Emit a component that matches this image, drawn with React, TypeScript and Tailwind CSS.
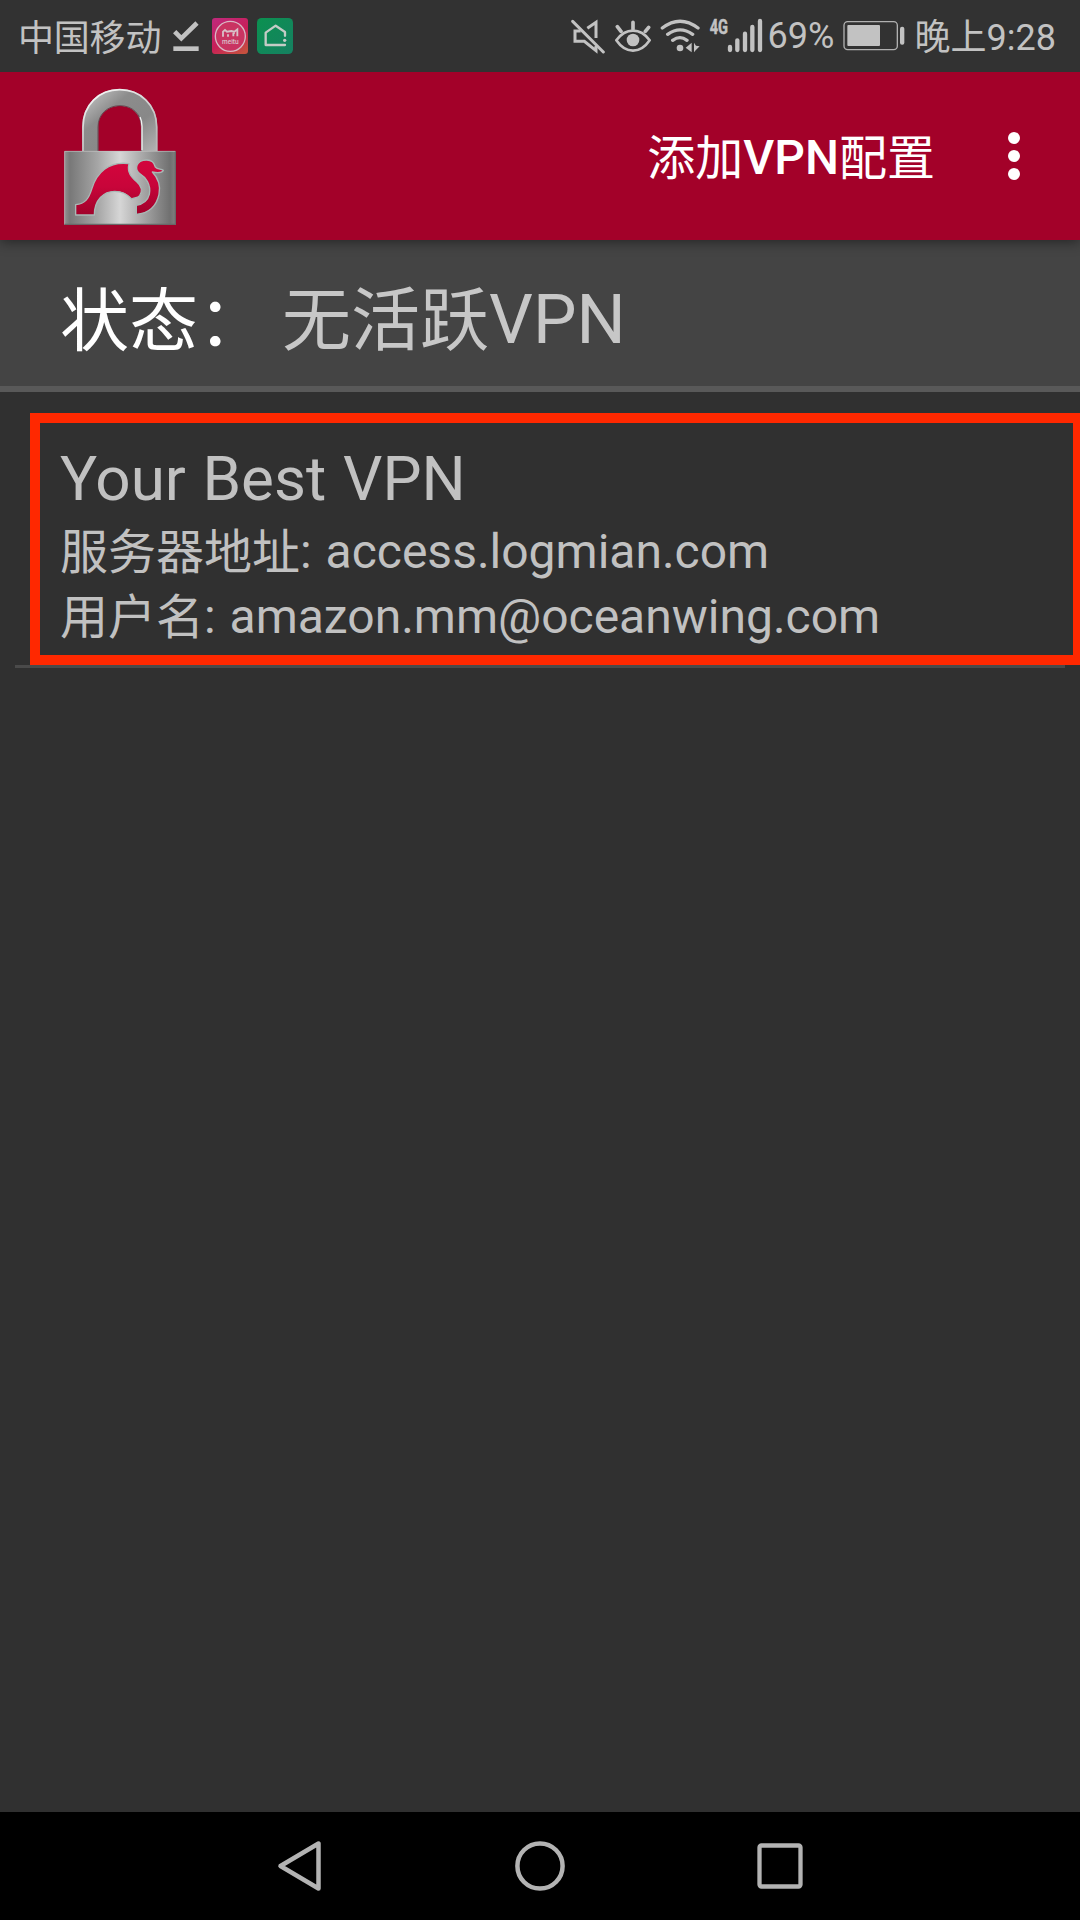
import React from "react";

function DownloadDone() {
  return (
    <svg className="ml-[11px] h-9 w-[28px]" viewBox="513 54 84 108">
      <path d="M521 95 541 115 588 69" fill="none" stroke="#c2c2c2" strokeWidth="14" />
      <path d="M517 146H593" stroke="#c2c2c2" strokeWidth="14" />
    </svg>
  );
}

function MeituIcon() {
  return (
    <svg className="ml-3 h-9 w-9" viewBox="0 0 108 108">
      <defs>
        <linearGradient id="meitu" x1="0.2" y1="0" x2="0.8" y2="1">
          <stop offset="0" stopColor="#c02878" />
          <stop offset="0.55" stopColor="#c81f58" />
          <stop offset="1" stopColor="#c5503f" />
        </linearGradient>
      </defs>
      <rect width="108" height="108" rx="9" fill="url(#meitu)" />
      <circle cx="55" cy="55" r="45" fill="#c93462" stroke="#d8b8c4" strokeWidth="4" />
      <path d="M33 56V41L39 36 45 41 58 39 67 41 76 34V55M48 56V49M64 55V46L68 44" fill="none" stroke="#d8c0c8" strokeWidth="5.5" />
      <text x="30" y="78" fontSize="22" fontWeight="500" fontFamily="Roboto, sans-serif" fill="#d8c0c8" textLength="50" lengthAdjust="spacingAndGlyphs">meitu</text>
    </svg>
  );
}

function HouseIcon() {
  return (
    <svg className="ml-[9px] h-9 w-9" viewBox="0 0 108 108">
      <defs>
        <linearGradient id="house" x1="0" y1="0" x2="1" y2="1">
          <stop offset="0" stopColor="#0b9150" />
          <stop offset="1" stopColor="#168061" />
        </linearGradient>
      </defs>
      <rect width="108" height="108" rx="14" fill="url(#house)" />
      <path d="M84 53V42L56 23 26 44V81H84" fill="none" stroke="#c4ccc6" strokeWidth="7" strokeLinejoin="round" strokeLinecap="round" />
      <circle cx="83" cy="67" r="5" fill="#c4ccc6" />
    </svg>
  );
}

function MuteIcon() {
  return (
    <svg className="h-9 w-[34px]" viewBox="33 54 102 108" fill="none" stroke="#c2c2c2" strokeWidth="9">
      <path d="M38 64 130 156" strokeLinecap="round" />
      <path d="M62 93H45V124H73L108 152V138M82 85 108 67V114" />
    </svg>
  );
}

function EyeIcon() {
  return (
    <svg className="ml-[10px] h-9 w-9" viewBox="165 54 108 108" fill="none" stroke="#c2c2c2" strokeWidth="8">
      <path d="M169 121Q190 92 219 92T269 121Q248 152 219 152T169 121Z" strokeLinejoin="round" />
      <circle cx="219" cy="120" r="19" fill="#c2c2c2" stroke="none" />
      <path d="M219 67V88M172 80 183 94M266 82 256 94" strokeWidth="11" strokeLinecap="round" />
    </svg>
  );
}

function WifiIcon() {
  return (
    <svg className="ml-[9px] h-9 w-[41px]" viewBox="300 54 123 108" fill="none" stroke="#c2c2c2" strokeWidth="10" strokeLinecap="round">
      <path d="M307 84Q360 43 414 84M323 103Q360 76 398 103M338 121Q360 105 381 121" />
      <circle cx="360" cy="144" r="10" fill="#c2c2c2" stroke="none" />
      <path d="M377 143 395 128V157ZM402 128 402 157 407 151 419 139 408 137Z" fill="#c2c2c2" stroke="none" />
    </svg>
  );
}

function SignalIcon() {
  return (
    <svg className="ml-2 h-9 w-[54px] overflow-visible" viewBox="447 54 162 108">
      <text x="449" y="102" fontSize="59" fontWeight="700" fontFamily="Roboto, sans-serif" fill="#c2c2c2" stroke="#c2c2c2" strokeWidth="1.5" textLength="55" lengthAdjust="spacingAndGlyphs">4G</text>
      <path d="M510 141V150M532 121V150M555 101V150M577 81V150M600 63V150" stroke="#c2c2c2" strokeWidth="13" strokeLinecap="round" />
    </svg>
  );
}

function BatteryIcon() {
  return (
    <svg className="h-9 w-[62px]" viewBox="249 54 186 108">
      <rect x="252" y="65" width="160" height="84" rx="11" fill="none" stroke="#b0b0b0" strokeWidth="4" />
      <rect x="262" y="75" width="98" height="63" rx="3" fill="#c2c2c2" />
      <rect x="420" y="80" width="13" height="54" rx="6" fill="#c2c2c2" />
    </svg>
  );
}

function StatusBar() {
  return (
    <header className="relative z-20 flex h-[72px] items-center bg-[#323232] pl-[18px] pr-6 text-[36px] leading-[36px] text-[#c2c2c2]">
      <span className="relative top-[2.5px] tracking-[-0.2px]">中国移动</span>
      <DownloadDone />
      <MeituIcon />
      <HouseIcon />
      <div className="ml-auto flex items-center">
        <MuteIcon />
        <EyeIcon />
        <WifiIcon />
        <SignalIcon />
        <span className="relative top-[-0.5px] ml-[5px] w-[75px]">69%</span>
        <BatteryIcon />
        <span className="relative top-[2px] ml-[10px] whitespace-nowrap">晚上9:28</span>
      </div>
    </header>
  );
}

function LockLogo() {
  return (
    <svg className="mt-[2px] h-36 w-[120px]" viewBox="60 42 360 432">
      <defs>
        <linearGradient id="body" x1="0" y1="0" x2="1" y2="0">
          <stop offset="0" stopColor="#929292" />
          <stop offset="0.05" stopColor="#787878" />
          <stop offset="0.3" stopColor="#a6a6a6" />
          <stop offset="0.5" stopColor="#d6d6d6" />
          <stop offset="0.7" stopColor="#a8a8a8" />
          <stop offset="0.95" stopColor="#707070" />
          <stop offset="1" stopColor="#808080" />
        </linearGradient>
        <linearGradient id="shackle" x1="0" y1="0" x2="1" y2="1">
          <stop offset="0" stopColor="#d0d0d0" />
          <stop offset="0.35" stopColor="#8c8c8c" />
          <stop offset="0.65" stopColor="#888888" />
          <stop offset="1" stopColor="#b4b4b4" />
        </linearGradient>
        <linearGradient id="edge" x1="0" y1="0" x2="0.6" y2="1">
          <stop offset="0" stopColor="#ffffff" />
          <stop offset="0.5" stopColor="#d4d4d4" />
          <stop offset="1" stopColor="#b8b8b8" />
        </linearGradient>
        <linearGradient id="camel" x1="0" y1="0" x2="0" y2="1">
          <stop offset="0" stopColor="#d3053c" />
          <stop offset="0.45" stopColor="#c8053a" />
          <stop offset="1" stopColor="#a0022a" />
        </linearGradient>
      </defs>
      <path d="M127 242V168C127 100 176 54 239 54S352 100 352 168V242H303V168C303 130 276 105 240 105S175 130 175 168V242Z" fill="url(#shackle)" />
      <path d="M129 240V168C129 102 177 56 239 56S350 102 350 168V240" fill="none" stroke="url(#edge)" strokeWidth="5" />
      <path d="M174 240V168C174 130 202 104 240 104S304 130 304 168V240" fill="none" stroke="#5f4048" strokeWidth="2.5" />
      <path d="M306 238V166Q306 150 300 138" fill="none" stroke="#f2f2f2" strokeWidth="4" />
      <rect x="73" y="240" width="334" height="222" fill="url(#body)" />
      <path d="M74 460V241H406" fill="none" stroke="#c4c4c4" strokeWidth="3" opacity="0.65" />
      <path d="M74 460H406V242" fill="none" stroke="#686868" strokeWidth="4" />
      <g fill="url(#camel)" stroke="#a9b8b5" strokeWidth="4" strokeLinejoin="round">
        <path d="M107 432V401C136 398 146 384 156 352C170 306 205 270 267 278C260 306 276 320 290 332C304 344 308 360 299 374C293 381 283 380 275 384C259 366 245 361 224 361C191 361 163 387 163 432Z" />
        <path d="M289 430V403C311 399 324 386 328 370C334 340 316 318 302 310C282 298 286 267 320 267C334 267 343 275 346 288C353 296 362 293 370 298C366 306 353 306 337 303C355 322 362 346 357 370C349 407 325 427 289 430Z" />
      </g>
    </svg>
  );
}

function AppBar() {
  return (
    <div className="relative z-10 flex h-[168px] items-center bg-[#a30129] pl-[60px] pr-[60px] shadow-[0_2px_12px_rgba(0,0,0,0.45)]">
      <LockLogo />
      <button className="ml-auto mt-[4px] text-[48px] font-medium leading-[56px] text-white">
        <span className="relative top-px font-normal">添加</span>VPN<span className="relative top-px font-normal">配置</span>
      </button>
      <button className="ml-[73px] flex flex-col gap-[6px]" aria-label="更多">
        <span className="size-3 rounded-full bg-white" />
        <span className="size-3 rounded-full bg-white" />
        <span className="size-3 rounded-full bg-white" />
      </button>
    </div>
  );
}

function VpnCard() {
  return (
    <div className="-mr-[3px] ml-[30px] mt-[21px] h-[252px] border-[10px] border-[#ff2800] pl-5 pt-[20px] text-[48px] text-[#c1c1c1]">
      <h2 className="text-[62px] leading-[72px] [word-spacing:1.3px]">Your Best VPN</h2>
      <p className="mt-1 leading-[65px] [word-spacing:2px]"><span className="relative top-px">服务器地址</span>: access.logmian.com</p>
      <p className="leading-[65px] [word-spacing:2px]"><span className="relative top-px">用户名</span>: amazon.mm@oceanwing.com</p>
    </div>
  );
}

function NavBar() {
  return (
    <nav className="flex h-[108px] items-center justify-between bg-black px-[276px]" aria-label="导航">
      <svg className="h-[54px] w-12" viewBox="276 1839 48 54" fill="none" stroke="#b3b3b3" strokeWidth="4.5" strokeLinejoin="round">
        <path d="M280.5 1866 318.5 1843.5V1888.5Z" />
      </svg>
      <svg className="size-[54px]" viewBox="513 1839 54 54" fill="none" stroke="#b3b3b3" strokeWidth="4.5">
        <circle cx="540" cy="1866" r="22.6" />
      </svg>
      <svg className="h-[54px] w-12" viewBox="756 1839 48 54" fill="none" stroke="#b3b3b3" strokeWidth="4.3">
        <rect x="759.5" y="1845.5" width="41" height="41" rx="2" />
      </svg>
    </nav>
  );
}

export default function App() {
  return (
    <div className="flex h-[1920px] w-[1080px] flex-col overflow-hidden bg-[#303030] font-[Roboto,'Noto_Sans_CJK_SC',sans-serif]" lang="zh-CN">
      <StatusBar />
      <AppBar />
      <section className="flex h-[152px] items-center border-b-[6px] border-[#595959] bg-[#444444] pl-[60px] pt-[14px] text-[69px] leading-[80px]">
        <span className="relative top-[3px] w-[222px] whitespace-nowrap text-white">状态：</span>
        <span className="text-[#c7c7c7]"><span className="relative top-[2px]">无活跃</span>VPN</span>
      </section>
      <main className="flex-1">
        <VpnCard />
        <div className="mx-[15px] h-[3px] bg-[#4a4a4a]" />
      </main>
      <NavBar />
    </div>
  );
}
